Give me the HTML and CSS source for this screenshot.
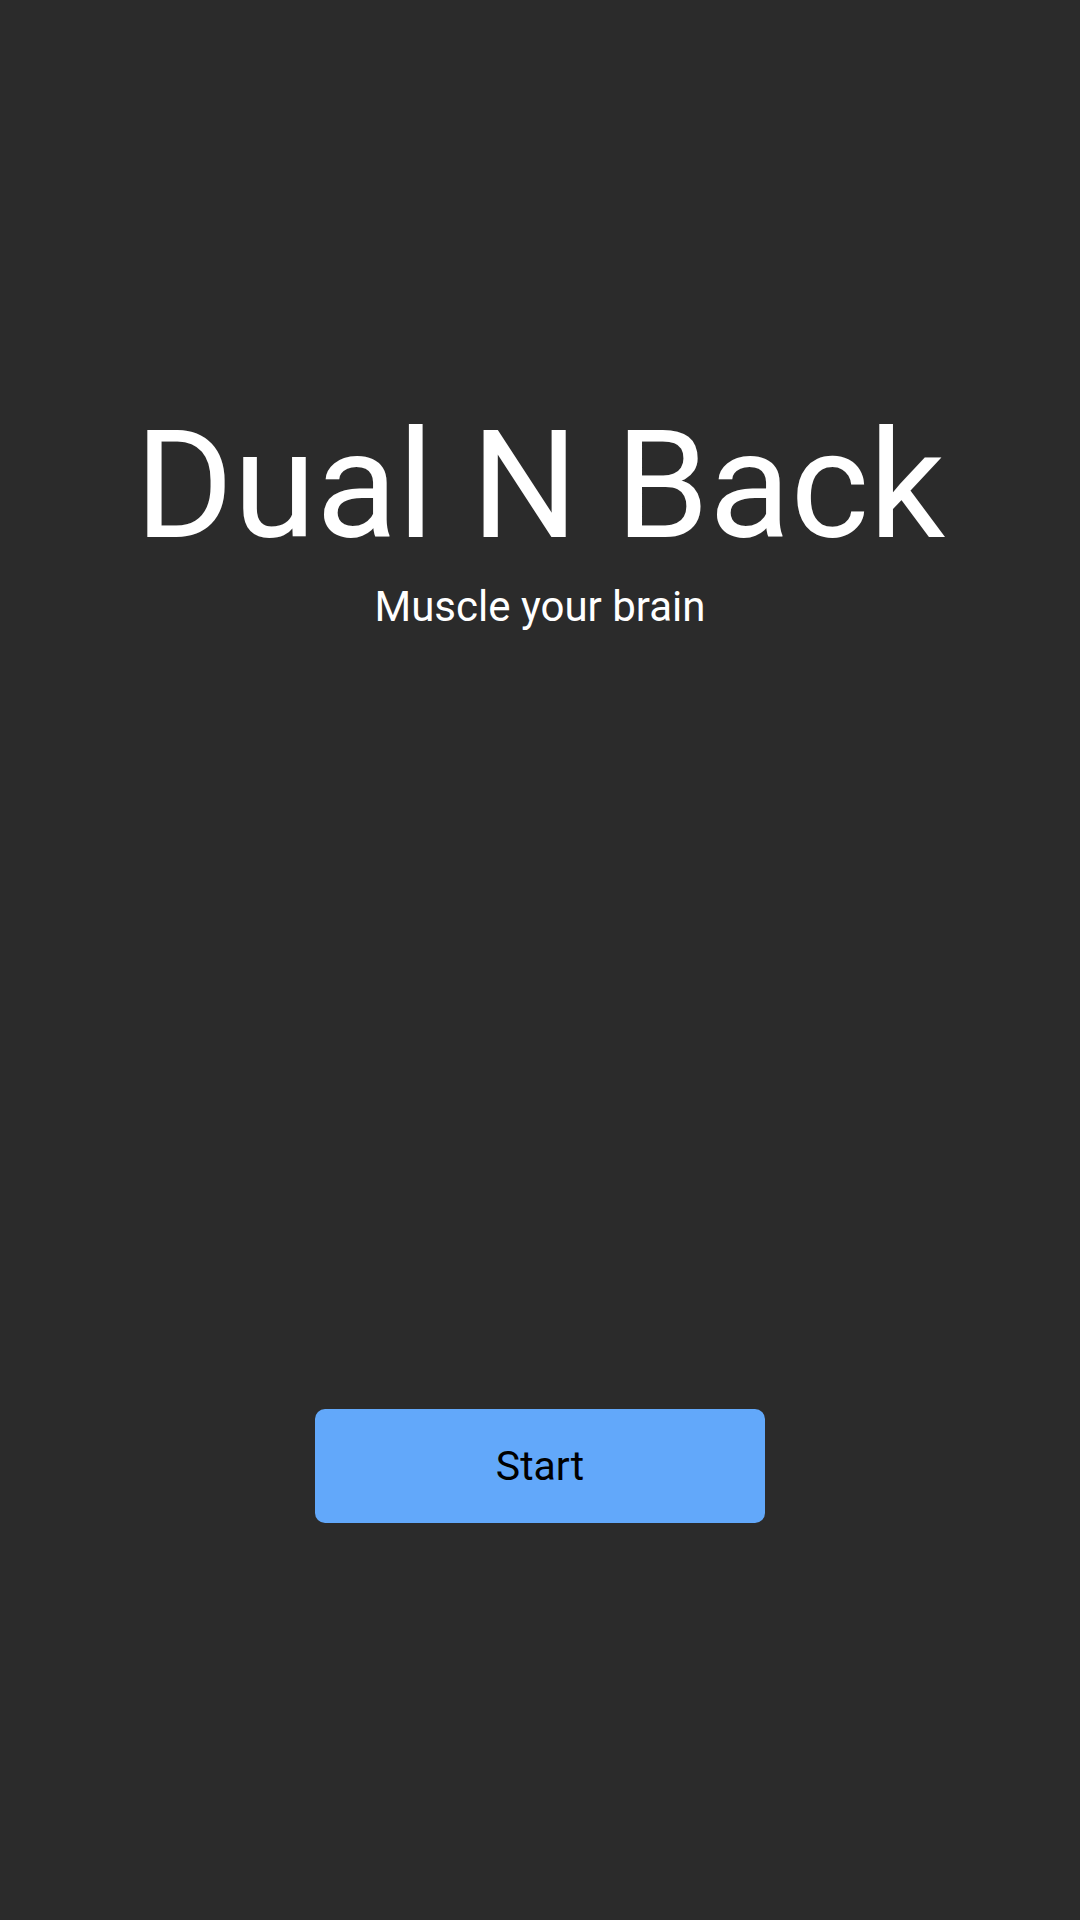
FILE: index.html
```html
<!DOCTYPE html>
<html>
<head>
<meta charset="utf-8">
<link rel="stylesheet" href="styles.css">
</head>
<body>
<main class="screen">
  <h1 class="title">Dual N Back</h1>
  <p class="subtitle">Muscle your brain</p>
  <button class="start">Start</button>
</main>
</body>
</html>
```
FILE: styles.css
```css
html, body {
  margin: 0;
  padding: 0;
  background: #2b2b2b;
}
.screen {
  width: 1080px;
  height: 1920px;
  box-sizing: border-box;
  padding-top: 411px;
  display: flex;
  flex-direction: column;
  align-items: center;
  font-family: Roboto, "Liberation Sans", sans-serif;
  color: #ffffff;
}
.title {
  margin: 0;
  font-size: 150px;
  font-weight: 400;
  line-height: 1;
}
.subtitle {
  margin: 25px 0 0;
  font-size: 42px;
  line-height: 1;
}
.start {
  margin-top: 781px;
  width: 450px;
  height: 114px;
  border: none;
  border-radius: 10px;
  background: #62a8fa;
  color: #000000;
  font-family: Roboto, "Liberation Sans", sans-serif;
  font-size: 41px;
  padding: 0;
}
```
